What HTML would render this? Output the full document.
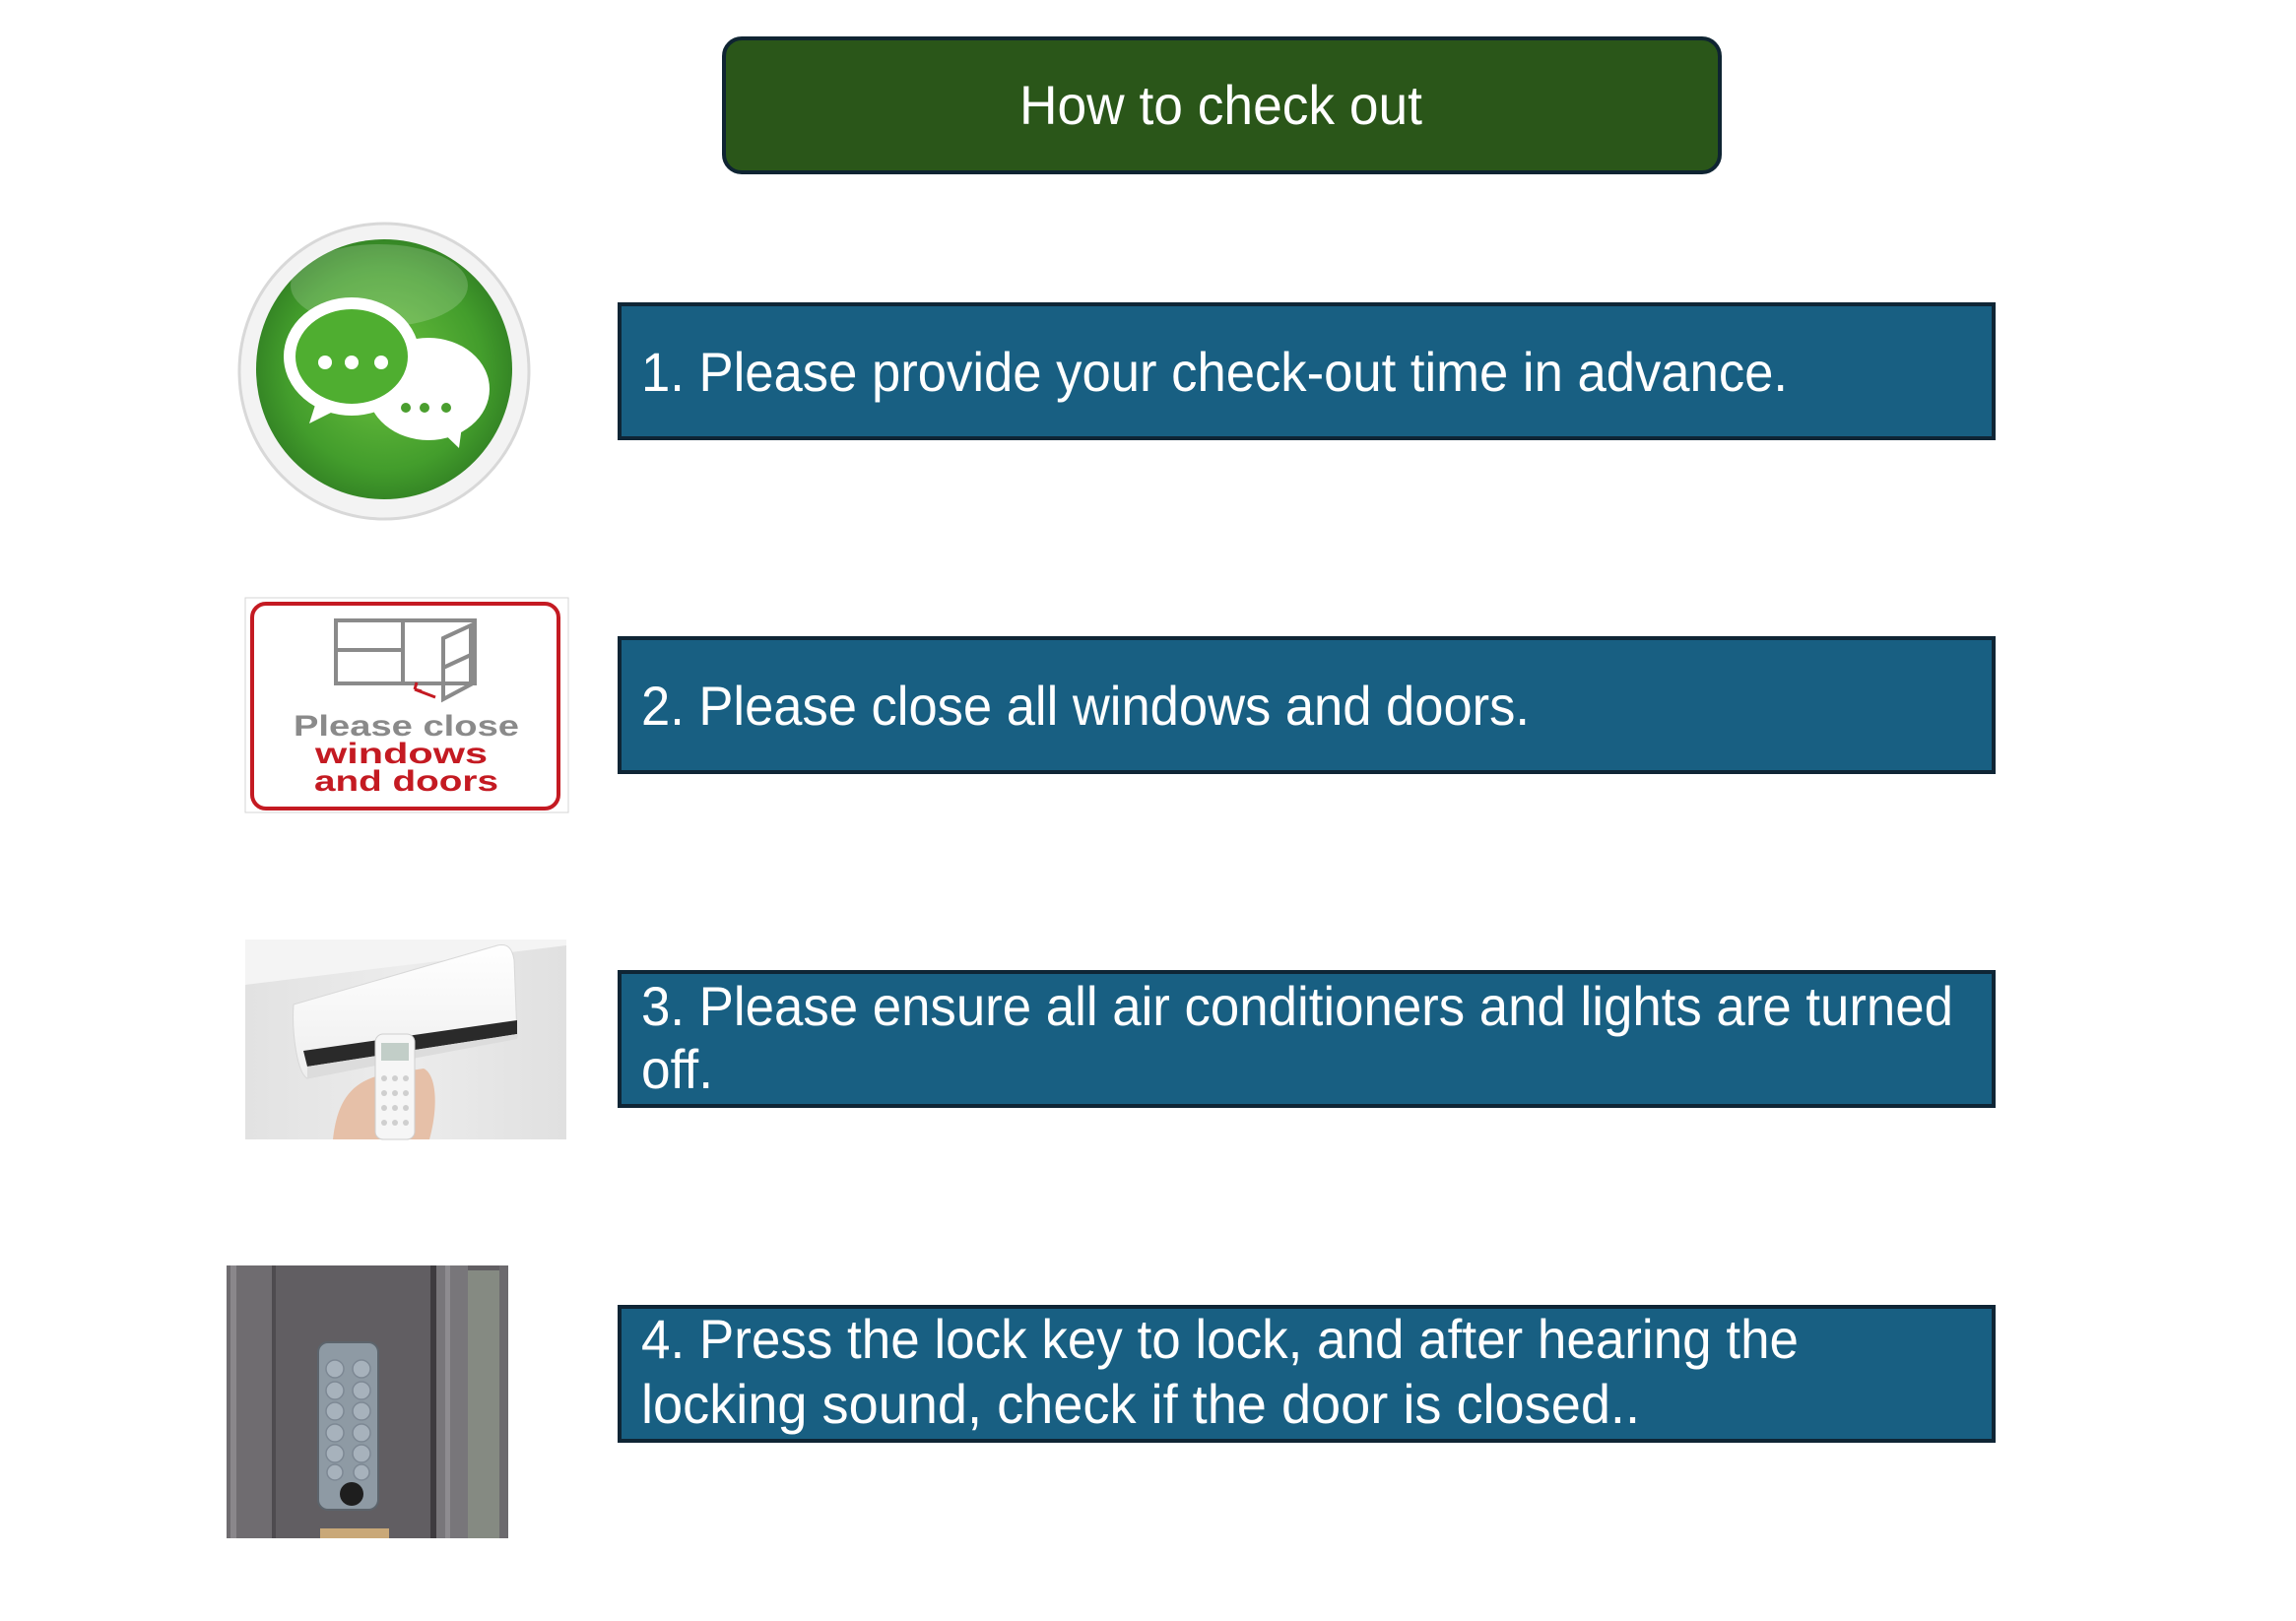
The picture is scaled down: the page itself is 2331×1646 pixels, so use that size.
<!DOCTYPE html>
<html><head><meta charset="utf-8"><style>
html,body{margin:0;padding:0;background:#fff;}
svg{display:block}
text{font-family:"Liberation Sans",sans-serif;fill:#fff}
</style></head><body>
<svg width="2331" height="1646" viewBox="0 0 2331 1646" xmlns="http://www.w3.org/2000/svg">
<defs>
<radialGradient id="g1" cx="0.5" cy="0.5" r="0.55">
<stop offset="0" stop-color="#6cc23f"/><stop offset="0.7" stop-color="#439d2c"/><stop offset="1" stop-color="#2f7c22"/>
</radialGradient>
<linearGradient id="ac" x1="0" y1="0" x2="1" y2="0">
<stop offset="0" stop-color="#e2e2e2"/><stop offset="0.5" stop-color="#ececec"/><stop offset="1" stop-color="#e0e0e0"/>
</linearGradient>
<linearGradient id="acu" x1="0" y1="0" x2="0" y2="1">
<stop offset="0" stop-color="#ffffff"/><stop offset="1" stop-color="#eeeeee"/>
</linearGradient>
</defs>

<rect x="735" y="39" width="1011" height="136" rx="18" fill="#2a5619" stroke="#0f2432" stroke-width="4"/>
<text x="1035" y="126" font-size="56" textLength="409" lengthAdjust="spacingAndGlyphs">How to check out</text>

<g fill="#185f82" stroke="#0f2535" stroke-width="4">
<rect x="629" y="309" width="1395" height="136"/>
<rect x="629" y="648" width="1395" height="136"/>
<rect x="629" y="987" width="1395" height="136"/>
<rect x="629" y="1327" width="1395" height="136"/>
</g>
<text x="651" y="397" font-size="56" textLength="1164" lengthAdjust="spacingAndGlyphs">1. Please provide your check-out time in advance.</text>
<text x="651" y="736" font-size="56" textLength="902" lengthAdjust="spacingAndGlyphs">2. Please close all windows and doors.</text>
<text x="651" y="1041" font-size="56" textLength="1332" lengthAdjust="spacingAndGlyphs">3. Please ensure all air conditioners and lights are turned</text>
<text x="651" y="1105" font-size="56" textLength="73" lengthAdjust="spacingAndGlyphs">off.</text>
<text x="651" y="1379" font-size="56" textLength="1175" lengthAdjust="spacingAndGlyphs">4. Press the lock key to lock, and after hearing the</text>
<text x="651" y="1445" font-size="56" textLength="1014" lengthAdjust="spacingAndGlyphs">locking sound, check if the door is closed..</text>

<ellipse cx="390" cy="377" rx="147" ry="150" fill="#f3f3f3" stroke="#d8d8d8" stroke-width="3"/>
<ellipse cx="390" cy="375" rx="130" ry="132" fill="url(#g1)"/>
<ellipse cx="385" cy="290" rx="90" ry="42" fill="#ffffff" opacity="0.18"/>
<ellipse cx="435" cy="395" rx="62" ry="52" fill="#fff"/>
<path d="M440 430 L466 455 L470 425 Z" fill="#fff"/>
<g fill="#4a9e2e"><circle cx="412" cy="414" r="5"/><circle cx="431" cy="414" r="5"/><circle cx="453" cy="414" r="5"/></g>
<ellipse cx="357" cy="362" rx="63" ry="54" fill="#4fae30" stroke="#fff" stroke-width="12"/>
<path d="M322 405 L314 430 L350 412 Z" fill="#fff"/>
<g fill="#fff"><circle cx="330" cy="368" r="7"/><circle cx="357" cy="368" r="7"/><circle cx="387" cy="368" r="7"/></g>

<rect x="249" y="607" width="328" height="218" fill="#fff" stroke="#d6d6d6" stroke-width="1"/>
<rect x="256" y="613" width="311" height="208" rx="14" fill="none" stroke="#c41a22" stroke-width="4"/>
<g fill="none" stroke="#8a8a8a" stroke-width="4">
<rect x="341" y="630" width="141" height="64"/>
<line x1="341" y1="660" x2="409" y2="660"/>
<line x1="409" y1="630" x2="409" y2="694"/>
<path d="M450 648 L478 635 L478 695 L450 710 Z"/>
<line x1="450" y1="678" x2="478" y2="665"/>
</g>
<path d="M421 700 L442 708 M421 700 L423 693 M421 700 L428 702" stroke="#c41a22" stroke-width="3" fill="none"/>
<text x="298" y="747" font-size="30" font-weight="bold" textLength="229" lengthAdjust="spacingAndGlyphs" style="fill:#8a8a8a">Please close</text>
<text x="320" y="775" font-size="30" font-weight="bold" textLength="175" lengthAdjust="spacingAndGlyphs" style="fill:#c41a22">windows</text>
<text x="319" y="803" font-size="30" font-weight="bold" textLength="187" lengthAdjust="spacingAndGlyphs" style="fill:#c41a22">and doors</text>

<rect x="249" y="954" width="326" height="203" fill="url(#ac)"/>
<path d="M249 954 L575 954 L575 960 L249 1000 Z" fill="#f4f4f4"/>
<path d="M298 1020 L505 960 C515 958 520 962 522 975 L525 1053 L312 1095 C302 1090 296 1050 298 1020 Z" fill="url(#acu)" stroke="#d8d8d8" stroke-width="1"/>
<path d="M308 1067 L525 1036 L525 1050 L312 1083 Z" fill="#2a2a2a"/>
<path d="M312 1083 L525 1050 L525 1055 L312 1095 Z" fill="#dcdcdc"/>
<path d="M338 1157 C342 1120 355 1100 385 1092 L430 1085 C442 1090 446 1120 436 1157 Z" fill="#e6c0a8"/>
<rect x="381" y="1050" width="40" height="107" rx="8" fill="#f6f6f6" stroke="#cfcfcf"/>
<rect x="387" y="1059" width="28" height="18" fill="#c2cec8"/>
<g fill="#cfcfcf"><circle cx="390" cy="1095" r="3"/><circle cx="401" cy="1095" r="3"/><circle cx="412" cy="1095" r="3"/><circle cx="390" cy="1110" r="3"/><circle cx="401" cy="1110" r="3"/><circle cx="412" cy="1110" r="3"/><circle cx="390" cy="1125" r="3"/><circle cx="401" cy="1125" r="3"/><circle cx="412" cy="1125" r="3"/><circle cx="390" cy="1140" r="3"/><circle cx="401" cy="1140" r="3"/><circle cx="412" cy="1140" r="3"/></g>

<rect x="230" y="1285" width="286" height="277" fill="#615e62"/>
<rect x="230" y="1285" width="50" height="277" fill="#6f6c70"/>
<rect x="234" y="1285" width="6" height="277" fill="#8a878b"/>
<rect x="276" y="1285" width="4" height="277" fill="#4e4b4f"/>
<rect x="437" y="1285" width="6" height="277" fill="#3e3b3f"/>
<rect x="443" y="1285" width="32" height="277" fill="#78767a"/>
<rect x="452" y="1285" width="5" height="277" fill="#8e8c90"/>
<rect x="475" y="1290" width="32" height="272" fill="#858a82"/>
<rect x="507" y="1285" width="9" height="277" fill="#6c6a6e"/>
<rect x="323" y="1363" width="61" height="170" rx="10" fill="#8e9aa4" stroke="#5c646c" stroke-width="2"/>
<g fill="#a7b2bc" stroke="#7d8894" stroke-width="1.5">
<circle cx="340" cy="1390" r="9"/><circle cx="367" cy="1390" r="9"/>
<circle cx="340" cy="1412" r="9"/><circle cx="367" cy="1412" r="9"/>
<circle cx="340" cy="1433" r="9"/><circle cx="367" cy="1433" r="9"/>
<circle cx="340" cy="1455" r="9"/><circle cx="367" cy="1455" r="9"/>
<circle cx="340" cy="1476" r="9"/><circle cx="367" cy="1476" r="9"/>
<circle cx="340" cy="1495" r="8"/><circle cx="367" cy="1495" r="8"/>
</g>
<circle cx="357" cy="1517" r="12" fill="#1e1e1e"/>
<rect x="325" y="1552" width="70" height="10" fill="#c9a878"/>
</svg>
</body></html>
